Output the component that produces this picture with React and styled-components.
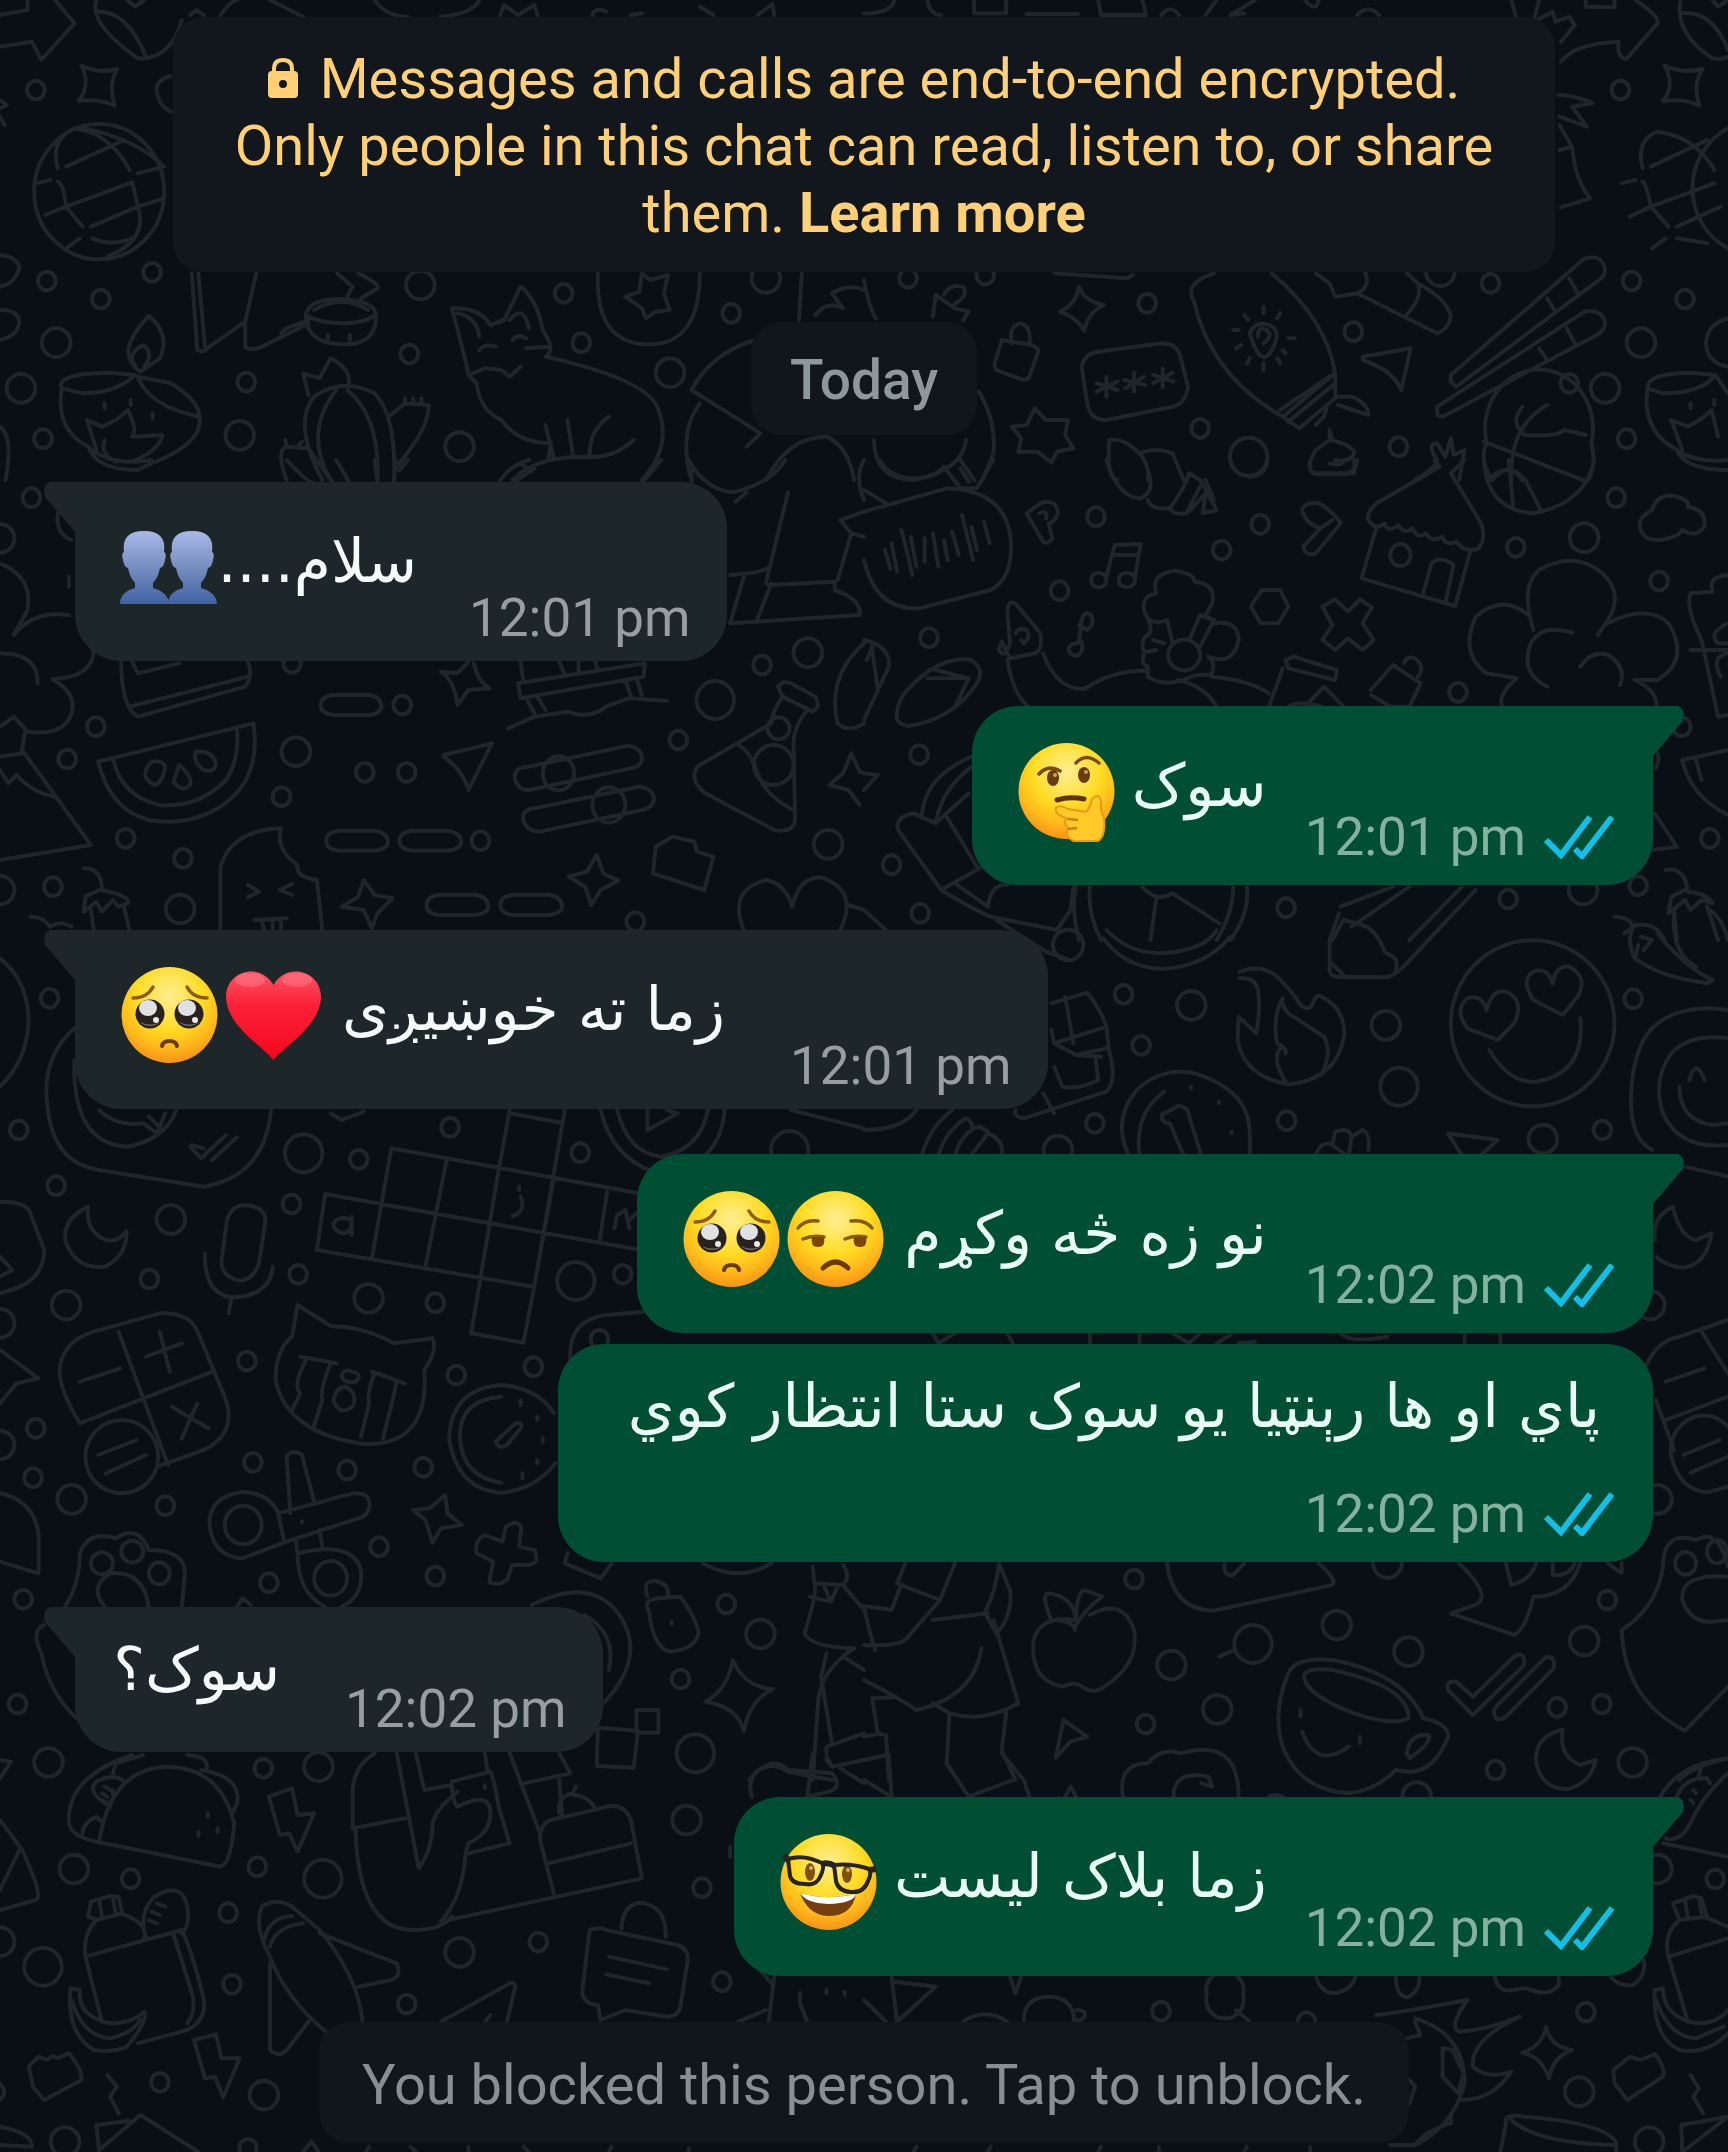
import React from 'react';
import styled, { createGlobalStyle } from 'styled-components';

const GlobalStyle = createGlobalStyle`
  * { box-sizing: border-box; }
  body {
    margin: 0;
    background: #0a0e15;
    font-family: Roboto, "Liberation Sans", sans-serif;
  }
`;

const Chat = styled.main`
  position: relative;
  display: flex;
  flex-direction: column;
  align-items: center;
  min-height: 100vh;
  padding: 17px 0 9px;
  overflow: hidden;
`;

const Wallpaper = styled.svg`
  position: absolute;
  inset: 0;
  width: 100%;
  height: 100%;
  fill: none;
  stroke: #20252a;
  stroke-width: 4px;
  stroke-linecap: round;
  stroke-linejoin: round;

  path, ellipse { vector-effect: non-scaling-stroke; }
`;

const Notice = styled.p`
  position: relative;
  width: 80%;
  max-width: 1385px;
  margin: 0 0 50px;
  padding: 29px 50px 25px;
  border-radius: 30px;
  background: #11171d;
  color: #ffd076;
  font-size: 56px;
  line-height: 67px;
  text-align: center;
`;

const LockIcon = styled.svg`
  width: 30px;
  height: 40px;
  margin-right: 22px;
  fill: currentColor;
`;

const LearnMore = styled.a`
  color: inherit;
  font-weight: 700;
  text-decoration: none;
`;

const DateChip = styled.time`
  position: relative;
  padding: 26px 39px 23px;
  border-radius: 30px;
  background: #11161d;
  color: #8e979b;
  font-size: 55px;
  font-weight: 500;
  line-height: 64px;
`;

const BlockedButton = styled.button`
  position: relative;
  margin-top: 46px;
  padding: 30px 43px 24px;
  border: 0;
  border-radius: 30px;
  background: #11161d;
  color: #888f93;
  font-family: inherit;
  font-size: 56px;
  line-height: 67px;
  cursor: pointer;
`;

const Thread = styled.ol`
  position: relative;
  align-self: stretch;
  display: flex;
  flex-direction: column;
  margin: 0;
  padding: 2px 75px 0;
  list-style: none;
`;

const bubbleGap = p => {
  if (p.$stacked) return '48px';
  if (p.$tight) return '52px';
  return p.$sent ? '38px' : '65px';
};

const Bubble = styled.li`
  position: relative;
  display: flex;
  flex-direction: ${p => p.$stacked ? 'column' : 'row'};
  align-self: ${p => p.$sent ? 'flex-end' : 'flex-start'};
  align-items: flex-end;
  gap: ${bubbleGap};
  margin-top: ${p => p.$joined ? '11px' : '45px'};
  padding: ${p => p.$sent ? '36px 39px 26px 46px' : '36px 37px 23px 46px'};
  border-radius: 46px;
  border-top-left-radius: ${p => p.$sent || p.$joined ? '46px' : '0'};
  border-top-right-radius: ${p => !p.$sent || p.$joined ? '46px' : '0'};
  background: ${p => p.$sent ? '#004e34' : '#1d2729'};
  color: ${p => p.$sent ? '#e9fff5' : '#f5fafb'};
`;

const Tail = styled.svg`
  position: absolute;
  top: 0;
  ${p => p.$sent ? 'left: calc(100% - 1px);' : 'right: calc(100% - 1px);'}
  width: 32px;
  height: 56px;
  fill: ${p => p.$sent ? '#004e34' : '#1d2729'};
`;

const Body = styled.div`
  display: flex;
  align-items: center;
  justify-content: space-between;
  width: ${p => p.$width}px;
  margin-right: ${p => p.$stacked ? '14px' : '0'};
  margin-bottom: ${p => p.$stacked ? '0' : p.$sent ? '19px' : '22px'};
`;

const Text = styled.span`
  padding-bottom: 12px;
  font-family: "DejaVu Sans", sans-serif;
  font-size: 60px;
  line-height: 52px;
  white-space: nowrap;
`;

const Emojis = styled.span`
  display: flex;
  gap: 7px;
`;

const EmojiSvg = styled.svg`
  width: 97px;
  height: 98px;
  overflow: visible;
`;

const Meta = styled.div`
  display: flex;
  align-items: center;
  gap: 18px;
  color: ${p => p.$sent ? '#86b09f' : '#989e9f'};
  font-size: 53px;
  line-height: 40px;
  white-space: nowrap;
`;

const TicksSvg = styled.svg`
  width: 70px;
  height: 44px;
  fill: none;
  stroke: #12bfe8;
  stroke-width: 6px;
`;

// emoji drawings, all on a 97 x 98 grid
const brown = '#6b3a0a';

const Face = () => <circle cx="48.5" cy="49" r="48" fill="url(#face)" />;

const Pleading = () => (
  <>
    <Face />
    <g fill="none" stroke="#8f5a0c" strokeWidth="3.5" strokeLinecap="round">
      <path d="M12 32Q26 32 32 21M66 21Q72 32 86 32" />
    </g>
    {[29, 68].map(x => (
      <g key={x}>
        <circle cx={x} cy="48" r="14.5" fill="#28211f" />
        <path d={`M${x - 10} 56a13 11 0 0 0 20 0q-9 5-20 0`} fill="#6b6b70" />
        <ellipse cx={x - 2} cy="42" rx="9" ry="8" fill="#dfe1e3" />
        <circle cx={x + 6} cy="54" r="3" fill="#e8e8e8" />
      </g>
    ))}
    <path d="M41 80Q42 75 48.5 75T56 80" fill="none" stroke={brown} strokeWidth="4" strokeLinecap="round" />
  </>
);

const Unamused = () => (
  <>
    <Face />
    <g fill="none" stroke="#8a5a08" strokeWidth="3.5" strokeLinecap="round">
      <path d="M11 38Q18 29 31 31M64 31Q78 29 85 38" />
      <path d="M16 49Q25 45 37 47M58 49Q67 45 79 47" />
    </g>
    <path d="M25 47H37Q39 57 31 57T25 47M67 47H79Q81 57 73 57T67 47" fill="#7a4505" />
    <path d="M36 78Q48.5 66 61 78" fill="none" stroke={brown} strokeWidth="5" strokeLinecap="round" />
  </>
);

const Thinking = () => (
  <>
    <Face />
    <g fill="none" stroke="#7c4a08" strokeWidth="3.5" strokeLinecap="round">
      <path d="M21 32Q30 22 42 29M58 21Q68 10 81 21" />
    </g>
    <ellipse cx="35" cy="36" rx="6" ry="8" fill={brown} />
    <ellipse cx="66" cy="33" rx="6" ry="8" fill={brown} />
    <circle cx="37" cy="33" r="2" fill="#c9a06a" />
    <circle cx="68" cy="30" r="2" fill="#c9a06a" />
    <path d="M39 58Q52 54 66 57" fill="none" stroke="#5f3208" strokeWidth="5" strokeLinecap="round" />
    <path
      d="M38 66Q42 62 50 67L68 70Q72 66 74 57Q81 50 83 59Q82 68 86 76Q88 94 80 99H56Q46 95 50 86Q45 80 48 76Q36 72 38 66Z"
      fill="#ffca28" stroke="#e99a18" strokeWidth="2" />
    <path d="M49 77L60 78M50 87L59 86" stroke="#d07d10" strokeWidth="2.5" fill="none" />
  </>
);

const Nerd = () => (
  <>
    <Face />
    <ellipse cx="30" cy="39" rx="5" ry="9" fill="#80500c" />
    <ellipse cx="67" cy="41" rx="5" ry="9" fill="#80500c" />
    <circle cx="31" cy="35" r="2" fill="#d8ae62" />
    <circle cx="68" cy="37" r="2" fill="#d8ae62" />
    <path d="M20 60Q48 68 76 61Q72 83 48 83Q28 82 20 60Z" fill="#74400e" />
    <path d="M20 60Q48 68 76 61Q74 70 48 71Q26 70 20 60Z" fill="#fff" />
    <g fill="none" stroke="#262320" strokeWidth="4" strokeLinejoin="round">
      <path d="M8 26Q24 21 42 30Q45 34 40 44Q36 53 25 51Q12 51 10 43Z" />
      <path d="M54 32Q72 30 89 36Q92 40 88 48Q84 60 71 59Q58 58 56 48Z" />
      <path d="M42 31Q48 29 55 33M4 22L9 28M89 37L96 36" strokeWidth="6" />
    </g>
  </>
);

const Heart = () => (
  <>
    <path
      d="M48.5 94C38 80 2 61 1 31C1 4 36-4 48.5 19C61-4 96 4 96 31C95 61 59 80 48.5 94Z"
      fill="url(#heart)" />
    <ellipse cx="25" cy="14" rx="15" ry="7" fill="#ff8f98" opacity="0.4" />
    <ellipse cx="72" cy="14" rx="15" ry="7" fill="#ff8f98" opacity="0.4" />
  </>
);

const Busts = () => (
  <g fill="url(#bust)">
    {[0, 48].map(x => (
      <path
        key={x}
        transform={`translate(${x} 0)`}
        d="M4 34Q1 13 24 13T44 34Q47 35 45 42Q44 49 40 50Q38 60 33 65V70Q48 74 49 86H0Q0 74 15 70V65Q10 60 8 50Q4 49 3 42Q1 35 4 34Z" />
    ))}
  </g>
);

const emojis = {
  pleading: ['🥺', Pleading],
  unamused: ['😒', Unamused],
  thinking: ['🤔', Thinking],
  nerd: ['🤓', Nerd],
  heart: ['❤️', Heart],
  busts: ['👥', Busts],
};

const Emoji = ({ name }) => {
  const [label, Drawing] = emojis[name];
  return (
    <EmojiSvg viewBox="0 0 97 98" role="img" aria-label={label}>
      <Drawing />
    </EmojiSvg>
  );
};

const EmojiGradients = () => (
  <defs>
    <radialGradient id="face" cx="0.5" cy="0.3" r="0.72">
      <stop offset="0" stopColor="#fdee92" />
      <stop offset="0.25" stopColor="#ffe65c" />
      <stop offset="0.5" stopColor="#ffdb22" />
      <stop offset="0.75" stopColor="#ffb91c" />
      <stop offset="1" stopColor="#f78d14" />
    </radialGradient>
    <linearGradient id="heart" x2="0" y2="1">
      <stop offset="0" stopColor="#ff5263" />
      <stop offset="0.4" stopColor="#fb2036" />
      <stop offset="1" stopColor="#f5061c" />
    </linearGradient>
    <linearGradient id="bust" x2="0" y2="1">
      <stop offset="0" stopColor="#a9b9e6" />
      <stop offset="0.55" stopColor="#7189bd" />
      <stop offset="1" stopColor="#3f62a5" />
    </linearGradient>
  </defs>
);

const Ticks = () => (
  <TicksSvg viewBox="0 0 70 44" role="img" aria-label="Read">
    <path d="M2 25L17 40L46 2M31 34L38 41L68 2" />
  </TicksSvg>
);

// Wallpaper doodles. Each panel has its own 1568 x 1440 grid, half a page wide.
// s, m, l are rings of three sizes; path holds everything else.
const panels = [
  {
    x: 0, y: 0,
    s: [[65,270],[85,843],[183,897],[276,817],[447,1146],[78,1316],[743,1062],[1023,880],[1055,1028],[1327,940]],
    m: [[102,1028],[38,1165],[435,1306],[834,1340],[763,855],[1216,1118],[1390,835]],
    l: [],
    path: `M0 45L50 30V0M100 0L135 70L75 180L58 125L0 140M175 0Q160 70 250 175Q310 180 330 60M175 35Q230 30 265 170M230 0L245 20L262 0
      M148 197Q180 222 213 207Q196 250 208 317Q180 295 143 303Q165 255 148 197Z M310 228Q280 240 285 280Q290 320 310 335
      M345 45L356 30L370 45M400 45Q420 0 430 0M490 0L550 50M680 0Q700 50 740 50M800 50Q860 40 870 0M908 45L915 15L940 45L970 15L975 45M1075 45Q1080 20 1100 35M1145 45L1165 40M1270 20L1295 45M1375 45L1402 12L1405 45
      M62 580A118 203 0 1 1 298 570A118 203 0 1 1 62 580M105 505Q90 420 135 385Q200 400 235 510M120 500L225 420M65 550L92 540M235 550L120 620Q115 550 105 545M82 645L120 620L150 680M165 680L250 620L240 545M250 620L298 595M250 620Q270 720 195 770M155 385Q250 420 298 500L250 520M120 745L145 715M168 715Q200 740 240 715
      M0 300L12 315L0 325M0 350L8 375M0 765Q30 770 35 800Q30 850 0 860M0 930Q35 930 35 970Q30 1010 0 1020
      M348 820L358 1050Q370 1060 380 1040L445 965L465 820M360 820L372 1040M445 965V1040Q455 1055 475 1040L560 970M510 1000L520 985L560 960
      M555 945Q560 895 620 898T682 945Q660 970 620 970T555 945Q555 1030 620 1033T682 945M570 930Q620 880 668 930M595 1020V1005M635 1020V1005M612 820L640 860L630 890M650 820Q700 860 680 870L655 895
      M270 948Q310 1000 290 1075L255 1115Q205 1060 270 948ZM245 1095Q230 1060 260 1035Q280 1060 262 1100
      M112 1165Q100 1120 200 1118L245 1125Q210 1180 150 1180ZM112 1165Q100 1290 160 1340Q175 1410 250 1410L275 1390Q370 1330 362 1250Q270 1220 250 1130L310 1150Q360 1200 362 1250M160 1340Q200 1400 275 1380M158 1260L185 1280Q215 1260 232 1230Q250 1290 240 1310L295 1305Q290 1350 240 1385M158 1260L175 1350M190 1320Q180 1360 210 1385M190 1210V1225M237 1200V1215M277 1240V1255
      M0 1280Q25 1310 10 1440
      M560 1185L550 1120L580 1135L600 1075Q640 1110 632 1160M585 1440Q530 1270 570 1190Q620 1130 680 1180Q720 1250 715 1440M610 1170Q550 1300 600 1440M630 1170Q690 1250 685 1440M705 1250L735 1210L778 1215Q780 1280 720 1400M735 1210V1195M750 1210V1195M765 1210V1195M520 1440Q500 1350 520 1340L560 1345L600 1440M520 1340L518 1320M540 1340L548 1325
      M820 925Q850 1110 850 1125L865 1150Q870 1230 910 1260Q940 1330 1000 1330M820 925Q870 920 890 975L915 960L945 860Q975 900 985 990Q1010 1050 990 1070Q1180 1140 1195 1230Q1220 1340 1165 1440M830 940Q865 950 870 1010M925 960Q950 910 960 985M850 1125L880 1105L910 1110L925 1130L945 1100M870 1050Q880 1030 900 1040M930 1020Q940 1000 955 1015M955 1045L995 1040
      M990 1275L1005 1375M1030 1260L1040 1370M1070 1365Q1070 1290 1105 1250M1150 1320Q1110 1380 1060 1370Q970 1370 930 1440M1000 1330L995 1375M945 1390L965 1415
      M1085 820Q1080 1030 1175 1033T1270 820M1165 820L1180 840L1212 825L1205 880L1215 930L1190 935L1172 955L1165 925L1135 890L1160 875Z
      M1370 1020Q1290 1060 1255 1170L1380 1300L1355 1340M1270 1210Q1230 1300 1255 1440M1390 1440Q1430 1310 1500 1310Q1540 1340 1550 1440M1455 820L1450 960M1480 945Q1500 900 1530 925L1510 880Q1540 850 1568 870`,
  },
  {
    x: 864, y: 0,
    s: [[1373,270],[1393,843],[1490,897],[514,910],[888,995],[1137,850],[610,1285],[970,1340],[1280,1150],[1384,1316],[220,825],[80,835]],
    m: [[1410,1028],[1345,1165],[1046,815]],
    l: [[698,1370]],
    path: `M0 40Q50 40 55 0M115 0Q120 45 140 45M200 0V40H258V0M295 42H388M425 0L430 45H512L505 0M540 45Q555 10 572 45M620 45L640 0M665 45L710 0M665 45L690 40M800 0Q820 40 825 0M895 45Q915 10 935 45M1175 0L1183 50M1225 0L1215 65L1250 35L1255 65L1280 50L1290 75M1310 0V20L1362 22V0M1400 0Q1445 50 1440 70L1383 178Q1365 170 1370 125Q1290 130 1265 185M1290 75L1265 125
      M1482 0Q1470 100 1540 175Q1560 180 1568 170M1482 40Q1540 30 1568 150M1540 0L1550 20L1568 0
      M1453 197Q1485 222 1522 207Q1503 250 1516 317Q1490 295 1450 303Q1473 255 1453 197Z
      M1260 285Q1290 285 1322 310L1285 320L1312 380L1262 350M1262 375L1285 440L1262 450M1285 440Q1290 540 1318 595L1265 622
      M1568 385A120 203 0 0 0 1568 745M1413 505Q1400 420 1440 395Q1510 410 1543 510M1428 500L1530 420M1375 550L1400 540M1543 550L1428 620Q1420 550 1413 545M1390 650L1428 620L1460 680M1475 680L1555 620M1475 715L1530 730M1430 745L1455 715
      M1308 775Q1340 760 1345 810Q1345 830 1330 845L1075 1160L1065 1145V1125ZM1240 895L1255 935M1280 835L1295 880M1308 935Q1340 925 1345 970Q1345 990 1330 1005L1050 1250L1040 1245V1220ZM1225 1045L1240 1080M1275 985L1290 1030
      M1130 1330A98 178 0 1 1 1320 1330M1130 1330Q1115 1380 1140 1440M1320 1330Q1330 1390 1315 1440M1195 1220Q1170 1270 1200 1305Q1260 1310 1270 1290L1310 1305M1240 1215Q1170 1280 1175 1440M1125 1325L1305 1440M1130 1440Q1170 1380 1195 1440
      M1568 1100Q1530 1090 1528 1030Q1530 970 1568 955M1422 1165Q1420 1120 1500 1118L1545 1125Q1520 1180 1450 1180ZM1422 1165Q1410 1290 1475 1350Q1490 1410 1568 1410M1545 1125L1568 1180M1475 1350Q1510 1390 1568 1380M1465 1260L1495 1280Q1520 1260 1538 1230L1550 1310M1465 1260L1485 1350M1500 1210V1225M1543 1200V1215
      M635 820Q580 850 598 900Q630 1130 760 1250L855 1120Q840 960 740 820M760 1250L790 1285L855 1195L855 1120M755 1230L845 1130M770 1265L855 1150M855 1190L885 1190Q915 1210 915 1245L860 1215M820 1275L835 1250L840 1220
      M700 1000Q710 960 735 975T740 1050T700 1000M715 1010Q715 975 730 990T725 1030M725 920V940M725 1090V1110M670 990H680M770 1015H782M690 945L697 960M755 940L750 955M675 1045L685 1035M765 1060L760 1050M695 1090L700 1075M755 1090L750 1075
      M820 820L845 850L855 890L895 880L1040 1000Q1060 990 1065 950Q1060 900 1005 850L985 820M895 880Q920 860 910 820M985 945Q1015 890 1005 850
      M345 820L478 835L488 825M390 860Q400 905 435 915Q405 940 400 992Q385 950 355 935Q385 915 390 860Z
      M268 1030Q262 975 285 970Q305 980 300 1035M250 1020L305 1035Q320 1045 315 1060L300 1130Q295 1145 280 1135L240 1110Q235 1100 238 1085Z
      M395 1100Q400 1060 425 1055L540 1030Q570 1030 575 1075L588 1160Q585 1210 560 1220L440 1260Q410 1260 405 1210Z
      M440 1130V1190M422 1150L460 1170M460 1145L422 1175M490 1118V1175M472 1140L510 1155M508 1130L474 1165M542 1105V1162M525 1125L562 1145M560 1118L525 1150
      M310 1225L330 1260L370 1260L365 1305L380 1345L350 1355L340 1388L315 1355L280 1355L285 1315L268 1280L295 1275Z
      M905 1070L992 1045L975 1170Q960 1110 905 1080Z
      M445 1320Q440 1440 460 1440M445 1320Q470 1310 500 1360Q530 1340 560 1360L580 1440M500 1360Q520 1400 515 1440M845 1290L850 1320Q890 1340 890 1360Q880 1390 855 1380M845 1290L845 1320L820 1350Q800 1400 815 1420H890V1380
      M1000 1440Q1040 1400 1040 1380Q1020 1330 1040 1330L1055 1370L1065 1315L1070 1365L1090 1350L1080 1440M18 1320Q20 1440 90 1440Q180 1410 185 1320M208 1175Q240 1260 235 1360L215 1440M175 1380L200 1440M0 840Q10 930 22 955M125 950L130 885L165 925L190 935L180 960M145 885Q155 850 180 860Q190 890 165 910`,
  },
  {
    x: 0, y: 460,
    s: [[57,113],[174,800],[122,897],[228,1135],[332,1195],[96,1280],[530,610],[730,735],[662,937],[738,937],[511,1010],[872,1142],[1383,615],[1231,840],[1153,1385]],
    m: [[537,875],[327,1347],[1466,578],[1503,1153],[0,235],[0,1290]],
    l: [[1298,720]],
    path: `M0 310Q60 350 50 450L25 525M25 525Q60 450 125 465M170 570Q170 650 95 658Q140 700 130 760Q115 830 50 815L25 770L0 800M0 580Q70 580 68 670M105 160Q100 220 130 240M125 350V380
      M45 820L40 870L165 1155L0 1200M0 890L40 880M0 930L15 970L30 945Q60 1000 100 1010
      M220 605Q220 740 250 770L445 680Q460 650 450 605M235 740L450 650M240 605L250 640L325 610
      M178 905L460 790Q475 960 400 1040Q340 1100 270 1080Q200 1050 178 905M205 895Q220 1010 290 1035Q360 1045 410 960Q435 900 430 805M275 905Q295 900 300 920Q295 970 280 975Q250 950 275 905M325 915Q350 950 345 975Q330 1000 315 965ZM355 875Q385 870 392 910Q390 940 370 930Q350 910 355 875
      M605 705H670Q690 710 692 735T670 765H605Q582 760 582 735T605 705ZM615 1112H680Q702 1118 704 1142T680 1172H615Q592 1167 592 1142T615 1112ZM748 1112H812Q835 1118 837 1142T812 1172H748Q725 1167 725 1142T748 1112ZM796 1304H862Q884 1310 886 1335T862 1365H796Q774 1360 774 1335T796 1304ZM930 1304H996Q1018 1310 1020 1335T996 1365H930Q908 1360 908 1335T930 1304Z
      M800 635L830 640L850 605M860 610Q865 660 888 685L850 690L830 735Q825 660 800 635
      M940 670L1170 610L1168 650L945 715ZM945 605L950 665M1015 605L1025 645M1050 605V640M1080 605L1085 630M955 715L970 760M975 710L990 750M1135 660L1145 710M1155 655L1165 705M922 805L970 770L1030 755Q1070 780 1100 740L1140 715L1210 722
      M805 885L893 850L850 990Q840 930 805 890Z
      M935 960Q930 920 960 920L1140 857Q1165 865 1165 895Q1165 920 1145 925L960 990Q940 990 935 960M985 940A28 50 0 1 0 1042 940A28 50 0 1 0 985 940M950 1080Q945 1050 970 1045L1160 980Q1185 985 1187 1015Q1185 1045 1165 1050L980 1115Q955 1115 950 1080M1075 1035A30 53 0 1 0 1135 1035A30 53 0 1 0 1075 1035
      M1412 680Q1420 660 1435 670L1480 710Q1490 740 1475 755L1420 710ZM1420 710Q1400 760 1400 790L1265 920Q1250 960 1280 1000L1405 1110Q1440 1120 1443 1080L1440 850Q1440 800 1465 750M1340 855Q1360 870 1375 940T1440 1050M1393 805A20 33 0 1 0 1433 805A20 33 0 1 0 1393 805M1368 915A36 60 0 1 0 1440 915A36 60 0 1 0 1368 915
      M1568 550Q1500 650 1520 790Q1540 820 1568 790M1545 880L1560 935L1568 940M1545 880L1530 940L1505 975L1540 990L1560 1035
      M400 1410V1220Q420 1110 510 1105Q500 1170 540 1215Q535 1250 575 1260L585 1410M450 1275L470 1295L450 1312M530 1272L508 1290L530 1305M462 1380L520 1375M475 1385L480 1410M495 1385V1410M510 1385V1410
      M660 1260L680 1305L712 1315L685 1360L675 1405L660 1350L620 1340L650 1310ZM1083 1185L1095 1240L1122 1262L1090 1290L1073 1335L1062 1280L1032 1250L1065 1235Z
      M1190 1160L1220 1130L1260 1145L1265 1175L1295 1190L1278 1290L1185 1240ZM1350 1410Q1320 1290 1390 1260Q1425 1270 1438 1340Q1450 1250 1490 1252Q1560 1290 1525 1410M1540 1335L1568 1350
      M152 1225Q185 1225 185 1290Q240 1310 232 1330L215 1340L205 1320L185 1355L175 1325L152 1355L155 1310L180 1290M165 1350L170 1410M225 1340L235 1410M55 1370Q80 1370 90 1400Q110 1380 130 1400
      M520 0Q560 70 570 70M575 0L605 70M610 0L635 70M680 0L685 70M718 0L715 70M740 0L725 30M905 70Q920 20 960 0M930 70L970 25M1165 70L1200 0M1250 0Q1280 90 1330 97Q1400 70 1425 0M1255 20V65M1355 97L1335 125M1568 0Q1550 50 1568 120M1430 97L1390 370M1525 180L1545 220L1568 230M1545 220L1520 360M1325 345Q1380 340 1392 325M1350 350L1325 490L1560 465Q1565 420 1515 390V365L1395 375M1400 370L1375 475M1525 180L1568 155`,
  },
  {
    x: 864, y: 460,
    s: [[421,170],[719,193],[649,270],[355,392],[118,533],[1365,113],[1183,262],[1443,363],[1078,697],[100,884],[50,1214],[102,1360],[766,1343],[1169,1317],[1405,1277],[1535,1135],[1484,800]],
    m: [[1307,233],[1305,1290]],
    l: [],
    path: `M0 155L150 85Q250 90 265 220Q275 350 230 390L100 445Q20 450 0 300M0 90L40 130M38 270L48 325M50 250L60 335M68 210L88 345M85 230L95 320M110 235V305M125 220L135 320M145 240L152 300M160 215L172 285M178 165L198 300M195 200L205 270M218 185L228 250
      M28 0Q50 60 100 55Q130 50 145 20M145 20L175 85H205L235 0M175 25L190 65M295 160L320 130Q350 115 352 160Q345 190 335 190L342 235Q335 255 325 245ZM318 160Q335 150 330 175
      M412 360A14 22 0 1 0 440 360A14 22 0 1 0 412 360M462 360A15 22 0 1 0 492 360A15 22 0 1 0 462 360M440 350L455 255L502 252L492 350M450 285H498
      M440 0Q460 110 500 115Q530 100 515 30M515 120Q520 150 555 145Q580 90 590 40L610 60L640 150M555 145Q560 165 585 160L610 80M590 155L620 100L615 160L640 150M620 60L635 120
      M795 150Q800 125 825 130Q850 150 865 190L820 280Q800 290 797 260L828 205Q800 190 795 150M828 205L850 180
      M665 0Q670 45 700 50Q730 45 732 0M810 0Q805 45 830 43H870Q895 35 895 0M845 10Q870 20 870 0
      M1035 0L1045 20L930 130Q905 170 920 190Q930 210 945 190Q950 220 970 195Q980 225 995 205Q1005 240 1020 220Q1030 250 1050 230Q1055 260 1075 245Q1090 280 1115 265Q1130 240 1120 190L1065 40L1090 0M930 200L903 355L1073 438L1100 275M955 285A18 32 0 1 0 992 285A18 32 0 1 0 955 285M1015 400L1030 310Q1045 285 1070 315L1055 430
      M1125 0Q1130 150 1215 160Q1310 130 1325 0M1170 0L1178 135M1210 0L1305 60M1140 60Q1170 0 1200 60L1230 155
      M1415 225Q1395 180 1430 150Q1440 100 1470 108Q1500 120 1495 140Q1530 150 1525 200Q1510 235 1485 210Q1480 230 1445 240Q1420 240 1415 225
      M245 570Q255 600 265 550L260 450Q265 410 280 440L320 520Q325 570 310 580L265 595L250 545ZM275 520Q280 500 295 510Q305 530 290 550L285 540M260 600Q270 700 298 740M325 580Q350 690 400 687Q450 630 510 632M630 650Q700 660 735 700M570 660Q620 680 640 740
      M390 545L395 480Q400 450 412 465Q420 490 405 510L390 495M395 545Q400 585 382 587Q365 575 375 555Z
      M510 460Q520 500 550 480L560 550M510 460Q500 410 530 400Q520 340 565 332Q600 340 600 365Q640 370 632 430L620 465M510 460Q530 520 510 530Q500 560 510 575Q500 610 515 620L515 650Q540 680 580 660Q600 640 630 645Q640 610 625 590M525 540L545 550M515 575L530 570M590 540L610 465L635 480L610 560M635 490Q680 480 680 540Q670 620 625 590M552 585A28 45 0 1 0 610 585A28 45 0 1 0 552 585
      M722 390H755L770 440L752 490H720L702 440ZM832 440L855 418L878 455L900 418L922 442L905 490L925 540L905 570L878 535L855 570L832 540L850 495Z
      M765 600L780 590L858 630L855 660L770 625ZM760 625L735 740M770 740Q790 720 830 740M800 740L835 680L870 740M920 690L960 615L1010 670L990 740H955L920 705M980 610Q985 585 1000 595Q1020 620 1005 650
      M1215 510Q1190 380 1225 330Q1290 270 1340 340Q1380 400 1350 480L1332 525M1205 465Q1160 400 1110 470Q1080 580 1130 640L1185 655Q1150 700 1158 740M1350 490Q1420 430 1460 490Q1500 600 1440 660L1398 660Q1440 690 1438 740M1240 680Q1190 640 1210 550Q1230 490 1285 518M1300 620Q1320 570 1350 585Q1385 620 1372 675
      M1568 345Q1530 350 1540 395L1500 400Q1490 440 1520 540L1550 770L1568 765M1568 490Q1530 520 1550 550H1568M1568 580Q1535 590 1555 650M1500 570H1568
      M0 540Q50 560 45 620L0 780M5 600L15 560M15 570L25 690M60 760Q60 700 120 630Q160 590 195 600Q220 630 205 670Q160 780 80 798Q55 790 60 760M115 655H190L165 740M130 630L190 655M0 940L25 945L0 990
      M195 890Q110 950 105 1065M195 920Q140 990 130 1090L90 1060Q55 1070 62 1110L140 1290Q200 1350 230 1370L350 1410M150 1070L205 1220M140 1290L215 1220M165 1270L225 1340Q230 1270 260 1275M130 1090L190 1000
      M1485 900L1568 870M1485 900Q1500 1010 1568 1065M1510 900L1520 960M1435 1060L1475 1160L1430 1170M1440 880Q1445 900 1437 925
      M385 1280Q375 1340 390 1440M410 1280Q405 1360 430 1440M695 1280Q700 1360 665 1440M670 1280Q670 1360 640 1440M505 1280Q530 1330 560 1300L645 1390M530 1320L520 1440M0 1350L40 1410M350 1410L375 1350L380 1280
      M960 1280L865 1340M990 1280L885 1400M1085 1280L990 1440M1110 1290L1030 1430
      M1455 1230Q1490 1220 1495 1295Q1530 1300 1540 1330L1520 1320L1500 1350L1490 1320L1460 1360L1465 1310L1490 1290M1470 1350L1475 1440M1530 1340L1550 1440`,
  },
  {
    x: 0, y: 900,
    s: [[90,295],[34,690],[102,857],[817,682],[651,778],[1053,758],[529,912],[271,1137],[541,1123],[790,1208],[1130,1123],[968,1400],[1088,1318]],
    m: [[310,958],[120,1215],[669,1195],[0,1270]],
    l: [[551,760],[1045,1143],[1433,750]],
    path: `M0 175Q50 240 52 360Q50 480 0 560M135 385Q70 480 88 640Q100 790 180 810L370 860Q480 830 492 630M135 480Q130 730 230 740Q300 720 320 630M180 630Q210 680 260 670M260 670L285 700L300 640M270 650L295 690M345 740L365 775L410 705M385 780L430 712M348 735L370 745
      M0 905Q50 905 55 940L80 1050Q80 1140 20 1170L0 1180M0 1070L22 1110L0 1130M160 920Q110 960 120 1030Q140 1110 190 1100Q230 1070 230 992Q210 1040 180 1010Q155 980 160 920Z
      M412 960Q420 915 445 915Q480 920 482 960L470 1090Q460 1140 435 1142Q400 1130 402 1080ZM372 1060Q370 1180 420 1192Q490 1190 495 1100M420 1192L415 1240
      M925 630L905 810L855 1300L950 1328L970 1155L1025 630M710 745L1155 878M590 882L1155 1048M575 1050L968 1160M710 745L675 1075M590 882L575 1050M810 785L772 1100M1005 835L970 1155M1102 875L1088 1025M925 640L1020 668M605 970Q615 945 638 960Q640 1000 620 1000Q605 990 605 970M638 950V1005M942 860V870M945 890Q955 935 930 948M1115 985L1120 945L1135 930L1142 985M1142 960L1155 940
      M1090 630Q1110 770 1185 815M1120 630Q1140 760 1200 770Q1270 750 1285 630M1315 630Q1310 720 1280 765M1175 630V690L1230 640L1210 630M1435 630L1568 685M600 640L620 660L660 635
      M1035 1380Q1030 1260 1100 1245L1170 1235`,
  },
  {
    x: 864, y: 900,
    s: [[471,283],[503,436],[419,670],[767,662],[1396,296],[1340,690]],
    m: [[594,316],[947,376],[1232,717],[352,750],[1427,1215]],
    l: [[971,560]],
    path: `M435 115Q470 200 540 207Q620 200 665 110M440 90Q480 160 540 160Q620 150 640 90M330 155L370 178M343 135A27 45 0 1 0 398 135A27 45 0 1 0 343 135
      M845 120V215Q850 235 870 230L950 232Q970 220 985 190L1030 110M850 120L870 60L905 75Q930 90 945 155L960 170Q970 180 965 210M845 185L870 225M845 120L862 40
      M682 215Q720 190 750 230Q780 280 790 310Q805 340 815 310Q820 280 830 290Q870 320 872 400Q860 540 770 553Q690 530 678 420L680 350L712 400Q720 330 715 270Q710 230 682 235M830 525Q850 460 835 410L770 340Q755 310 760 295Q740 350 750 430Q770 450 765 460M765 545Q740 480 755 445
      M340 310L405 278Q430 330 440 380L445 455Q460 540 440 575L290 655Q270 650 275 630M340 390L345 430L440 380M380 430L365 290M345 430L385 465L440 445M385 465L430 470M345 500L360 560Q390 570 425 540L420 470M325 580L345 640
      M1065 370A148 248 0 1 1 1362 370A148 248 0 1 1 1065 370M1150 420L1095 385Q1070 330 1095 295Q1120 280 1130 330Q1140 265 1165 275Q1200 300 1180 370ZM1268 345L1215 300Q1190 240 1215 215Q1240 200 1250 250Q1255 195 1280 200Q1315 230 1295 290ZM1135 450Q1170 550 1220 545Q1310 520 1300 355
      M1568 330Q1490 310 1440 370Q1400 420 1393 560Q1385 710 1430 750M1568 415Q1500 400 1465 460Q1430 540 1450 640Q1480 750 1568 735M1480 560Q1480 660 1540 675L1568 670M1498 540Q1510 470 1525 540
      M480 765Q450 660 495 570Q540 500 600 520Q700 570 700 700V765M500 765Q490 640 545 575M540 645L570 618Q590 620 590 650L612 765M555 670L580 765M540 645Q540 670 555 670M594 560V565M644 605V610M667 695V700
      M105 765Q120 680 160 630M135 765Q150 690 185 655Q200 670 195 680M165 765Q180 690 210 680L225 695M195 765L225 700Q255 720 250 765M0 690Q70 690 95 630
      M820 765Q830 720 850 735L855 695Q880 680 885 710L905 690Q920 700 915 750M850 735L875 765M885 710L880 765M1060 700L1150 720L1120 765M1060 700L1085 765M1490 800L1568 830
      M1468 920Q1430 950 1435 1020M1468 920Q1480 1010 1510 1020L1538 1000Q1530 1090 1490 1103Q1455 1100 1438 1070
      M1380 100L1400 75Q1440 65 1455 130Q1500 210 1540 240L1530 250Q1440 230 1400 175L1405 135M1400 75Q1380 110 1400 180M1410 110L1430 120L1415 150M1362 50Q1390 50 1395 80M1455 130L1440 100M1470 40Q1465 160 1510 200M1535 30Q1560 60 1568 120M240 60L330 155`,
  },
  {
    x: 0, y: 1300,
    s: [[65,385],[60,533],[300,617],[459,487],[630,510],[768,502],[488,848],[790,828],[688,740],[42,898],[32,1212],[478,1405],[1318,912],[1235,1137],[448,183],[828,225],[968,200]],
    m: [[130,598],[0,435],[88,1387],[578,1400],[1380,1002]],
    l: [[1262,1360]],
    path: `M0 150L70 235L30 250L0 310M145 370Q100 250 110 190Q120 120 170 95L290 40Q345 35 360 100L410 300Q430 400 370 450L285 500M215 95L305 495M145 370L385 215M145 245L218 205M265 170L330 130M290 95L308 215M312 320L378 385M358 310L330 415M155 470A65 108 0 1 1 287 470A65 108 0 1 1 155 470M178 465L248 420M192 520L265 465
      M540 15L600 78Q660 80 715 130L785 115Q795 150 770 210Q780 440 660 432Q520 400 500 240Q500 150 530 110ZM545 170L610 190M555 180Q530 260 545 280L530 330M600 190Q580 270 585 300L568 385M675 215L735 250M680 220Q665 280 670 310L655 410M720 245Q710 320 705 350L695 415M620 225Q625 205 640 215Q660 225 645 245Q620 250 620 225M605 300Q610 260 628 260Q650 280 640 320Q615 350 605 300
      M815 415Q820 260 915 255Q980 270 1005 340M815 415Q830 570 910 578Q970 570 1008 490M910 290Q830 300 835 420Q840 530 910 548M900 425L935 370Q950 365 945 385L920 435Q905 450 900 425M945 300V315M975 350V360M985 415V425M975 480V490M948 520V535
      M520 470Q530 445 548 465L570 605M520 470L527 640M505 640L640 580Q675 575 670 625Q665 650 650 655L520 725M505 640L515 720M548 663V668M505 640Q490 580 440 575Q380 590 380 670Q385 770 440 775L520 725M408 675A33 57 0 1 0 475 675A33 57 0 1 0 408 675M580 690L585 740M537 725L540 760Q540 880 590 920M540 760Q640 720 655 810Q660 890 620 920M570 835A30 52 0 1 0 630 835A30 52 0 1 0 570 835
      M750 630L780 625L808 585L812 640L838 675L800 685L785 728L772 660ZM918 680L932 668Q950 670 945 700L942 740L970 750Q980 790 960 795L930 795L920 840Q905 860 888 845L895 785L865 760Q860 720 880 705L912 725Z
      M0 580Q60 600 70 700V820L0 785M118 920Q145 850 145 760Q160 690 210 715Q250 670 270 750Q340 750 335 830L330 920M165 790A20 33 0 1 0 205 790A20 33 0 1 0 165 790M220 755A20 33 0 1 0 260 755A20 33 0 1 0 220 755M270 820A19 33 0 1 0 308 820A19 33 0 1 0 270 820M190 920Q160 860 200 820Q260 810 270 920
      M80 975Q55 990 75 1060Q90 1190 150 1270M430 920L440 895L455 915M965 915Q1080 820 1130 960Q1170 1080 1095 1210M1060 945Q1120 1000 1105 1110M1030 760L1025 790L1090 835L1110 790M1275 790Q1340 850 1400 790
      M1175 890Q1165 840 1190 843Q1215 850 1213 890M1178 935Q1165 900 1195 895L1235 890Q1265 960 1268 1000Q1260 1050 1215 1055Q1185 1040 1178 935M1219 965V972M1478 850L1475 800M1530 795Q1545 830 1530 855L1478 850Q1485 870 1460 1000Q1470 1040 1545 1045M1495 855L1508 905L1520 860M1470 890L1508 905M1530 855L1568 930
      M1330 1080Q1350 1160 1402 1168Q1360 1200 1350 1295Q1340 1220 1280 1205Q1320 1170 1330 1080ZM1155 1230H1195V1298H1155ZM1085 1283L1158 1292L1150 1403L1083 1398Z
      M1550 1045Q1490 1110 1485 1200L1475 1440M1500 1060L1490 1130L1510 1330M1545 1045L1530 1070L1568 1110M1500 1360V1340L1568 1300M1500 1370L1510 1400L1568 1380M1360 1440Q1390 1370 1430 1415L1510 1440`,
  },
  {
    x: 864, y: 1300,
    s: [[490,837],[511,1272],[1349,900],[1258,1222],[1339,1212],[1146,1410]],
    m: [[558,1095],[641,1228],[858,975],[988,1055],[1307,1023],[1395,1387],[1440,598],[950,790]],
    l: [[706,1032]],
    path: `M75 790L60 850L138 900L165 790M65 865L50 930L0 918M0 920Q10 1000 20 1050M0 1035Q70 1040 80 1010L138 900M125 960L225 940M220 935Q240 870 245 790L265 870Q270 950 240 1000L220 940M235 960L280 1210Q220 1270 155 1240L125 1210M0 1140Q60 1190 95 1230Q200 1190 213 1045M155 1240L150 1390L170 1440M258 1240L250 1350L275 1440M15 1195L55 1192M15 1195L25 1300L40 1305L45 1440M0 1310L30 1300M0 1380L40 1365
      M383 990Q380 960 340 960Q320 880 335 880Q380 890 385 960Q385 880 400 870L432 890Q400 930 385 975M383 960Q320 945 308 1020Q300 1140 360 1160Q385 1140 400 1165Q420 1185 440 1155Q500 1090 490 990Q470 890 410 945
      M550 790Q560 930 635 932L850 855Q860 840 825 790M655 790Q650 830 670 825L690 790M1080 790Q1150 900 1100 920L1065 940L1180 1005Q1200 990 1215 890Q1280 890 1300 790M1165 790L1175 855Q1210 840 1220 790M1250 790V825Q1280 830 1290 790M1375 790V820L1350 790
      M1568 800Q1550 680 1510 720Q1450 690 1450 800Q1440 920 1375 990Q1380 1200 1490 1292L1568 1160M1472 790A18 32 0 1 0 1510 790A18 32 0 1 0 1472 790M1530 755A18 35 0 1 0 1566 755A18 35 0 1 0 1530 755M1568 830Q1480 820 1485 900Q1500 970 1540 965L1568 960
      M770 1120Q780 1070 850 1080Q980 1120 1015 1255Q1060 1270 1060 1310Q1030 1440 965 1410Q930 1470 880 1480Q790 1470 760 1340Q740 1240 770 1120M800 1140Q790 1100 850 1110Q990 1160 988 1255Q960 1280 890 1240Q810 1190 800 1140M792 1230V1250M900 1310V1330M795 1295Q820 1410 880 1340M985 1360Q990 1300 1025 1305Q1030 1330 990 1375Z
      M1060 1170Q1055 1140 1075 1145L1105 1190L1180 1070Q1200 1050 1198 1095L1105 1245ZM1145 1250Q1140 1230 1150 1215L1235 1075Q1255 1060 1252 1105L1165 1250Q1150 1265 1145 1250M645 1070L672 1050
      M1268 1288Q1215 1310 1220 1390Q1230 1465 1275 1468Q1320 1450 1328 1380L1300 1395Q1260 1370 1268 1288M362 1260L405 1310L375 1325L348 1373ZM470 1490Q460 1390 515 1390Q540 1340 575 1360Q680 1310 680 1490M562 1490Q560 1410 625 1430L632 1460L612 1450
      M1420 195Q1440 120 1480 110L1568 60M1520 95L1568 220M1455 245L1525 205M1455 360L1568 290M1437 300L1470 450M1465 470A60 105 0 0 1 1568 380M1465 470Q1480 570 1530 577L1568 560M1487 465L1553 420M1500 518L1568 470M1480 1440Q1500 1400 1568 1375
      M125 100L135 130L165 100M260 100L270 130M410 100V130M500 105V130M560 100L590 130L610 100M640 130L665 105M680 130L710 125M865 100Q880 130 950 110M1090 100V130M1155 100V130`,
  },
  {
    x: 0, y: 1700,
    s: [[237,536],[467,500],[414,638],[421,853],[738,912],[977,726],[1310,845],[1274,563],[290,1147],[450,1345]],
    m: [[134,507],[1246,360],[834,757],[479,1185],[118,1325],[0,725]],
    l: [[586,536],[78,800]],
    path: `M240 165Q120 230 125 370Q130 410 175 425L400 500Q420 490 425 370Q400 200 300 200Q200 210 180 425M150 400Q150 370 175 350L185 365M200 320Q150 270 180 240Q210 220 225 245M205 220L210 190L260 165M340 165Q380 170 375 205M365 210Q440 230 430 310L422 340M377 340V350M395 385V395M360 397V407M190 260L200 270M185 280L195 290M185 300L195 310M205 270V285
      M488 290L530 265L540 345L570 340L540 455L525 400L508 405ZM352 1020L392 1003L402 1075L435 1075L405 1192L390 1130L372 1135Z
      M680 160Q640 200 640 280V385L735 355M720 160L760 505Q785 450 785 370Q790 330 830 275M755 160L770 270L820 255M880 160L885 215M820 245L890 215Q900 260 905 320L925 430L850 460M820 245Q820 300 830 320Q890 270 890 340Q890 400 850 430L845 460Q840 590 800 665M645 385Q650 690 750 690Q800 690 820 650M800 665L1165 535L1145 360Q1130 300 1090 325L1000 360Q980 370 980 420L1005 580M925 160L980 400M950 250L1035 220L1015 160M1015 240L1020 350M1040 285Q1070 290 1080 325M1015 340Q1010 290 1040 280L1045 260M995 490L1145 430M880 255V265
      M0 360L40 450Q80 590 65 600L0 630M0 570L35 450M0 180L20 185L0 235
      M160 650L165 605L200 588L215 590L222 640L175 660ZM180 600L185 650M205 595L210 640M175 660Q150 700 155 770L185 965M220 640Q270 670 262 715M155 770L330 690Q350 760 370 900Q375 960 340 990L250 1030M315 705Q330 780 350 890Q355 940 340 970M265 715Q250 640 280 590Q330 540 340 620Q345 680 330 700M285 610L300 620M275 635L290 645M270 660L285 670
      M128 865L145 870Q140 950 200 970Q240 970 262 935Q270 960 230 1040Q200 1060 170 1050Q120 1000 128 865M130 900Q150 1010 200 1015Q240 1000 255 960
      M475 620Q500 590 530 620L580 690Q650 830 658 965M475 620Q460 680 490 770Q520 900 595 1000M490 740Q500 680 550 670M480 715Q490 650 530 648M580 700L720 790Q730 830 710 840L650 860M490 790V1050Q510 1080 525 1040L560 965M800 965L920 855Q935 840 935 860L920 965M880 965L890 945
      M1070 690Q1090 680 1100 690L1230 735Q1250 745 1248 780L1235 920Q1230 950 1210 950L1135 930L1090 960L1085 915Q1055 910 1057 870ZM1128 685Q1130 610 1165 608Q1210 620 1208 710M1105 770L1210 808M1100 823L1178 850
      M52 1100L70 1070L85 1080L95 1068L105 1075L125 1060Q150 1110 148 1140L80 1200L60 1160ZM195 1125L212 1160L200 1190L215 1240M180 1356L175 1275L235 1262M180 1350L255 1245L360 1356M0 1280Q60 1300 58 1340L0 1335M0 1150Q15 1180 0 1200
      M1340 735L1400 850M1395 965L1405 830M1340 965L1390 930M1452 880V910L1465 965M1500 870V880M1533 875V885M1365 290Q1350 220 1400 190Q1420 190 1430 210L1510 220Q1530 260 1505 275L1465 290M1475 160L1465 290M1510 200L1500 180M1525 205L1568 250M1325 440V470M550 1356L565 1325L578 1356M665 1356L670 1340M745 1340L755 1356M850 1340V1356M950 1340L960 1356M1105 1356L1110 1340M1250 1345V1356`,
  },
  {
    x: 864, y: 1700,
    s: [[1545,537],[539,934],[1310,936],[803,965]],
    m: [[1298,1175],[1425,1325],[1440,507],[1003,290]],
    l: [],
    path: `M50 830L60 965L130 860L55 845M265 830L275 880L285 830M180 965Q220 920 260 965M290 965Q290 890 335 890T382 965M385 930Q405 930 400 950Q395 965 380 960M622 885A34 57 0 1 0 688 885A34 57 0 1 0 622 885M675 930L700 965M820 830Q830 880 855 880Q885 870 892 830M965 830Q965 890 988 892Q1010 870 1008 830M1145 830Q1150 880 1180 870Q1200 860 1210 870Q1240 885 1250 870Q1265 860 1260 830M1355 830Q1370 860 1395 855Q1420 830 1415 780
      M930 945Q1000 930 1095 900Q1060 980 1080 995Q1130 990 1190 950Q1100 1020 1105 1100Q1130 1140 1175 1115Q1140 1200 1085 1200M1000 955Q1090 1000 1090 1150Q1070 1280 1000 1335H955M985 1015L1010 1005L1000 965M1050 1045L1068 1050L1088 1120L1078 1180L1050 1130ZM1065 1240V1270Q1020 1290 1000 1335M990 1140L1000 1160L990 1210
      M1238 980Q1245 1040 1285 1050Q1250 1070 1243 1135Q1230 1070 1195 1058Q1230 1040 1238 980ZM1360 1110L1390 1070L1410 1080L1435 1062Q1455 1100 1450 1130L1385 1200L1362 1150ZM1500 1125L1515 1165L1505 1190L1523 1240
      M1155 1356L1165 1270Q1160 1240 1200 1250Q1350 1270 1365 1330V1356M1175 1260Q1220 1330 1365 1335M1485 1356L1483 1275L1568 1250M1490 1350L1568 1250
      M1450 430L1568 470M1445 290Q1480 190 1568 175M1475 290Q1490 230 1530 235L1535 250M1515 230L1520 190M1568 220Q1520 290 1500 370Q1480 430 1455 415M1505 270L1510 280M1500 300L1505 310
      M1468 610L1505 588L1520 595L1530 650L1480 660ZM1490 600L1495 650M1515 595L1520 640M1480 660Q1450 700 1460 770L1495 965M1525 650L1568 680M1460 770L1568 715M1435 870L1450 865Q1450 950 1510 970Q1550 970 1568 930M1435 870Q1430 1010 1480 1050Q1530 1065 1568 1000M1438 900Q1460 1010 1510 1015L1560 980
      M150 190L190 290M250 160L290 240L300 290M190 290L270 240M45 165L50 290L0 240M365 290L375 260L385 290M735 290Q745 280 760 290M40 965L0 900M90 1356L95 1340M225 1356L230 1340M425 1356L430 1340M535 1340V1356M690 1356L695 1340M810 1340V1356`,
  },
];

const ringSizes = { s: [16, 28], m: [26, 43], l: [34, 57] };

const Doodles = () => (
  <Wallpaper viewBox="0 0 1728 2152" preserveAspectRatio="xMidYMin slice" aria-hidden="true">
    <EmojiGradients />
    {panels.map((panel, i) => (
      <svg
        key={i}
        x={panel.x}
        y={panel.y}
        width="864"
        height="480"
        viewBox="0 0 1568 1440"
        preserveAspectRatio="none"
        overflow="visible"
      >
        <path d={panel.path} />
        {Object.keys(ringSizes).map(size => panel[size].map(([cx, cy]) => (
          <ellipse key={`${cx}-${cy}`} cx={cx} cy={cy} rx={ringSizes[size][0]} ry={ringSizes[size][1]} />
        )))}
      </svg>
    ))}
  </Wallpaper>
);

const messages = [
  { text: 'سلام....', emojis: ['busts'], time: '12:01 pm', width: 296, tight: true },
  { text: 'سوک', emojis: ['thinking'], time: '12:01 pm', width: 249, sent: true },
  { text: 'زما ته خوښیږی', emojis: ['heart', 'pleading'], time: '12:01 pm', width: 604 },
  { text: 'نو زه څه وکړم', emojis: ['unamused', 'pleading'], time: '12:02 pm', width: 584, sent: true },
  { text: 'پاي او ها رېنټيا يو سوک ستا انتظار کوي', emojis: [], time: '12:02 pm', width: 996, sent: true, joined: true, stacked: true },
  { text: 'سوک؟', emojis: [], time: '12:02 pm', width: 159 },
  { text: 'زما بلاک لیست', emojis: ['nerd'], time: '12:02 pm', width: 487, sent: true },
];

const Message = ({ message }) => {
  const { text, time, width, sent, joined, stacked, tight } = message;

  return (
    <Bubble $sent={sent} $joined={joined} $stacked={stacked} $tight={tight}>
      {!joined && (
        <Tail $sent={sent} viewBox="0 0 32 56" aria-hidden="true">
          <path d={sent ? 'M0 0H26Q34 3 31 15L1 50V56H0Z' : 'M32 0H6Q-2 3 1 15L31 50V56H32Z'} />
        </Tail>
      )}
      <Body dir="rtl" lang="ps" $sent={sent} $stacked={stacked} $width={width}>
        <Text>{text}</Text>
        {message.emojis.length > 0 && (
          <Emojis>
            {message.emojis.map(name => <Emoji key={name} name={name} />)}
          </Emojis>
        )}
      </Body>
      <Meta $sent={sent}>
        <time>{time}</time>
        {sent && <Ticks />}
      </Meta>
    </Bubble>
  );
};

function App() {
  return (
    <Chat>
      <GlobalStyle />
      <Doodles />
      <Notice>
        <LockIcon viewBox="0 0 30 40" aria-hidden="true">
          <path
            fillRule="evenodd"
            d="M4 13V11Q4 0 15 0T26 11V13Q30 13 30 17V36Q30 40 26 40H4Q0 40 0 36V17Q0 13 4 13ZM8 13H22V11Q22 4 15 4T8 11ZM15 22A4 4 0 1 0 15 30A4 4 0 1 0 15 22Z" />
        </LockIcon>
        Messages and calls are end-to-end encrypted. Only people in this chat can read, listen to, or share them.{' '}
        <LearnMore href="#learn-more">Learn more</LearnMore>
      </Notice>
      <DateChip>Today</DateChip>
      <Thread>
        {messages.map((message, i) => <Message key={i} message={message} />)}
      </Thread>
      <BlockedButton type="button">You blocked this person. Tap to unblock.</BlockedButton>
    </Chat>
  );
}

export default App;
